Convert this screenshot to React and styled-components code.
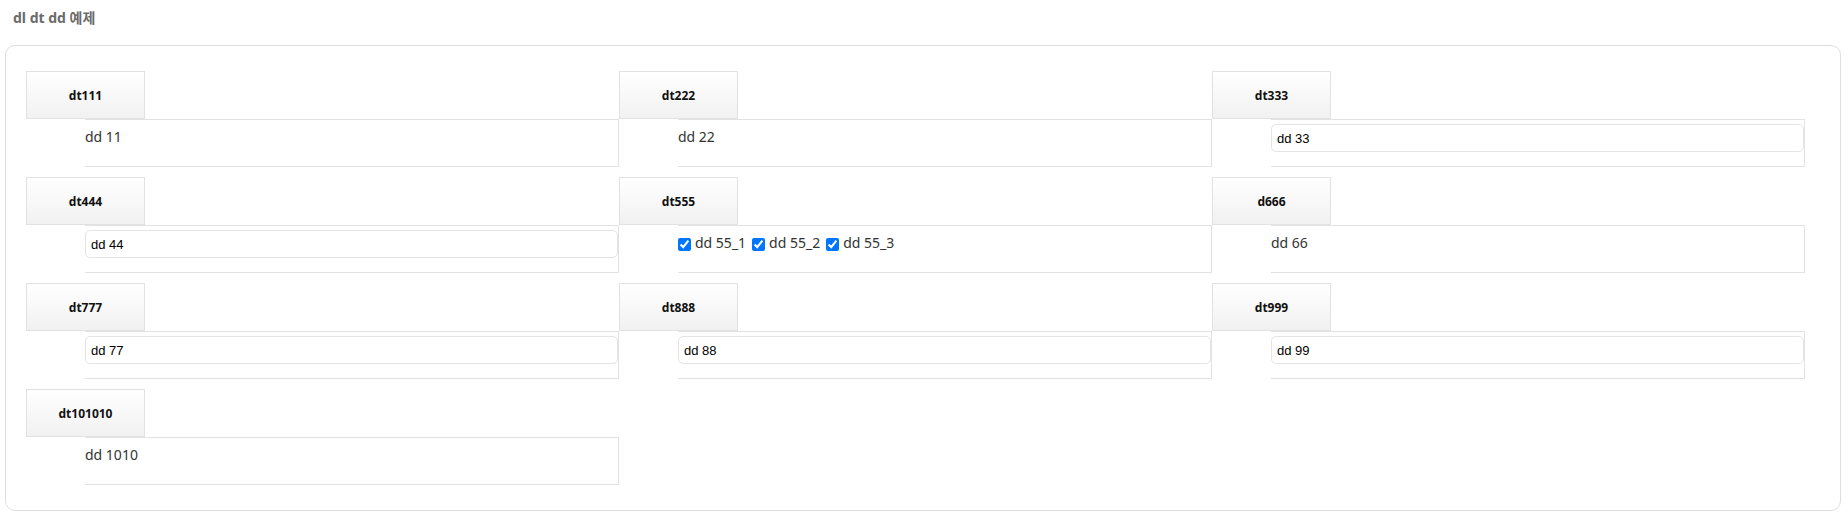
import React from 'react'
import styled, { createGlobalStyle } from 'styled-components'

const items = [
  { dt: 'dt111', kind: 'text', value: 'dd 11' },
  { dt: 'dt222', kind: 'text', value: 'dd 22' },
  { dt: 'dt333', kind: 'input', value: 'dd 33' },
  { dt: 'dt444', kind: 'input', value: 'dd 44' },
  { dt: 'dt555', kind: 'check', value: ['dd 55_1', 'dd 55_2', 'dd 55_3'] },
  { dt: 'd666', kind: 'text', value: 'dd 66' },
  { dt: 'dt777', kind: 'input', value: 'dd 77' },
  { dt: 'dt888', kind: 'input', value: 'dd 88' },
  { dt: 'dt999', kind: 'input', value: 'dd 99' },
  { dt: 'dt101010', kind: 'text', value: 'dd 1010' },
]

function App() {
  return (<>
    <GlobalStyle />
    <Page>
      <Title>dl dt dd 예제</Title>
      <Panel>
        <List>
          {items.map((item) => (
            <Item key={item.dt}>
              <Term>{item.dt}</Term>
              <Desc $input={item.kind === 'input'}>
                {item.kind === 'text' && item.value}
                {item.kind === 'input' && <Field type="text" defaultValue={item.value} />}
                {item.kind === 'check' && (
                  <Checks>
                    {item.value.map((v) => (
                      <CheckLabel key={v}>
                        <Check type="checkbox" defaultChecked />
                        {v}
                      </CheckLabel>
                    ))}
                  </Checks>
                )}
              </Desc>
            </Item>
          ))}
        </List>
      </Panel>
    </Page>
  </>
  )
}

export default App

const GlobalStyle = createGlobalStyle`
  body {
    margin: 0;
    background: #fff;
    font-family: "Noto Sans", "Noto Sans CJK KR", sans-serif;
  }
`

const Page = styled.div`
  width: 1845px;
  padding-top: 8px;
`

const Title = styled.h2`
  margin: 0 0 17px 13px;
  font-size: 14px;
  line-height: 20px;
  font-weight: 700;
  color: #6a6a6a;
`

const Panel = styled.div`
  margin: 0 4px 0 5px;
  border: 1px solid #dedede;
  border-radius: 10px;
  padding: 25px 17px 15px 20px;
`

const List = styled.dl`
  margin: 0;
  display: grid;
  grid-template-columns: repeat(3, 33%);
`

const Item = styled.div`
  margin-bottom: 10px;
`

const Term = styled.dt`
  box-sizing: border-box;
  width: 119px;
  height: 48px;
  border: 1px solid #e2e2e2;
  background: linear-gradient(to bottom, #ffffff, #f1f1f1);
  display: flex;
  align-items: center;
  justify-content: center;
  font-size: 12px;
  font-weight: 700;
  color: #111;
`

const Desc = styled.dd`
  box-sizing: border-box;
  margin: 0 0 0 59px;
  height: 48px;
  border-top: 1px solid #e2e2e2;
  border-right: 1px solid #e2e2e2;
  border-bottom: 1px solid #e2e2e2;
  padding: ${(p) => (p.$input ? '4px 0 0 0' : '7px 0 0 0')};
  font-size: 14px;
  line-height: 20px;
  color: #333;
`

const Field = styled.input`
  box-sizing: border-box;
  display: block;
  width: 100%;
  height: 28px;
  margin: 0;
  border: 1px solid #e4e4e4;
  border-radius: 5px;
  padding: 0 5px;
  font-family: "Liberation Sans", Arial, sans-serif;
  font-size: 13px;
  color: #000;
  outline: none;
`

const Checks = styled.div`
  display: flex;
  align-items: center;
`

const CheckLabel = styled.label`
  display: flex;
  align-items: center;
  margin-right: 6px;
`

const Check = styled.input`
  width: 13px;
  height: 13px;
  margin: 3px 4px 0 0;
  accent-color: #0075ff;
`
